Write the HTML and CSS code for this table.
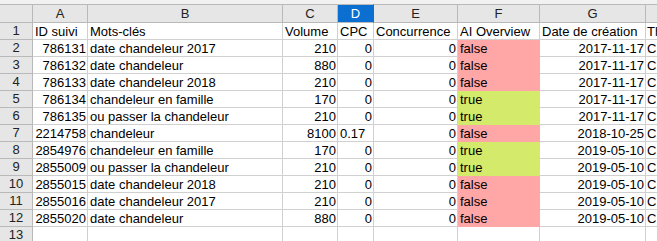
FILE: index.html
```html
<!DOCTYPE html>
<html lang="fr">
<head>
<meta charset="utf-8">
<title>Feuille</title>
<link rel="stylesheet" href="styles.css">
</head>
<body>
<div class="strip"></div>
<div class="sheet">
  <div class="ch corner"></div>
  <div class="ch">A</div>
  <div class="ch">B</div>
  <div class="ch">C</div>
  <div class="ch sel">D</div>
  <div class="ch">E</div>
  <div class="ch">F</div>
  <div class="ch">G</div>
  <div class="ch last"></div>

  <div class="rh">1</div>
  <div class="c">ID suivi</div>
  <div class="c">Mots-clés</div>
  <div class="c">Volume</div>
  <div class="c">CPC</div>
  <div class="c">Concurrence</div>
  <div class="c">AI <span class="spell">Overview</span></div>
  <div class="c">Date de création</div>
  <div class="c clip">Th</div>

  <div class="rh">2</div>
  <div class="c n">786131</div>
  <div class="c">date chandeleur 2017</div>
  <div class="c n">210</div>
  <div class="c n">0</div>
  <div class="c n">0</div>
  <div class="c f">false</div>
  <div class="c n">2017-11-17</div>
  <div class="c clip">C</div>

  <div class="rh">3</div>
  <div class="c n">786132</div>
  <div class="c">date chandeleur</div>
  <div class="c n">880</div>
  <div class="c n">0</div>
  <div class="c n">0</div>
  <div class="c f">false</div>
  <div class="c n">2017-11-17</div>
  <div class="c clip">C</div>

  <div class="rh">4</div>
  <div class="c n">786133</div>
  <div class="c">date chandeleur 2018</div>
  <div class="c n">210</div>
  <div class="c n">0</div>
  <div class="c n">0</div>
  <div class="c f">false</div>
  <div class="c n">2017-11-17</div>
  <div class="c clip">C</div>

  <div class="rh">5</div>
  <div class="c n">786134</div>
  <div class="c">chandeleur en famille</div>
  <div class="c n">170</div>
  <div class="c n">0</div>
  <div class="c n">0</div>
  <div class="c t">true</div>
  <div class="c n">2017-11-17</div>
  <div class="c clip">C</div>

  <div class="rh">6</div>
  <div class="c n">786135</div>
  <div class="c">ou passer la chandeleur</div>
  <div class="c n">210</div>
  <div class="c n">0</div>
  <div class="c n">0</div>
  <div class="c t">true</div>
  <div class="c n">2017-11-17</div>
  <div class="c clip">C</div>

  <div class="rh">7</div>
  <div class="c n">2214758</div>
  <div class="c">chandeleur</div>
  <div class="c n">8100</div>
  <div class="c">0.17</div>
  <div class="c n">0</div>
  <div class="c f">false</div>
  <div class="c n">2018-10-25</div>
  <div class="c clip">C</div>

  <div class="rh">8</div>
  <div class="c n">2854976</div>
  <div class="c">chandeleur en famille</div>
  <div class="c n">170</div>
  <div class="c n">0</div>
  <div class="c n">0</div>
  <div class="c t">true</div>
  <div class="c n">2019-05-10</div>
  <div class="c clip">C</div>

  <div class="rh">9</div>
  <div class="c n">2855009</div>
  <div class="c">ou passer la chandeleur</div>
  <div class="c n">210</div>
  <div class="c n">0</div>
  <div class="c n">0</div>
  <div class="c t">true</div>
  <div class="c n">2019-05-10</div>
  <div class="c clip">C</div>

  <div class="rh">10</div>
  <div class="c n">2855015</div>
  <div class="c">date chandeleur 2018</div>
  <div class="c n">210</div>
  <div class="c n">0</div>
  <div class="c n">0</div>
  <div class="c f">false</div>
  <div class="c n">2019-05-10</div>
  <div class="c clip">C</div>

  <div class="rh">11</div>
  <div class="c n">2855016</div>
  <div class="c">date chandeleur 2017</div>
  <div class="c n">210</div>
  <div class="c n">0</div>
  <div class="c n">0</div>
  <div class="c f">false</div>
  <div class="c n">2019-05-10</div>
  <div class="c clip">C</div>

  <div class="rh">12</div>
  <div class="c n">2855020</div>
  <div class="c">date chandeleur</div>
  <div class="c n">880</div>
  <div class="c n">0</div>
  <div class="c n">0</div>
  <div class="c f">false</div>
  <div class="c n">2019-05-10</div>
  <div class="c clip">C</div>

  <div class="rh">13</div>
  <div class="c"></div>
  <div class="c"></div>
  <div class="c"></div>
  <div class="c"></div>
  <div class="c"></div>
  <div class="c"></div>
  <div class="c"></div>
  <div class="c clip"></div>
</div>
</body>
</html>
```

FILE: styles.css
```css
html, body {
  margin: 0;
  padding: 0;
  background: #ffffff;
  overflow: hidden;
}
body {
  width: 657px;
  height: 241px;
  font-family: "Liberation Sans", Arial, sans-serif;
  font-size: 13px;
  color: #000000;
}
.strip {
  height: 4px;
  background: #f1f1f1;
}
.sheet {
  display: grid;
  grid-template-columns: 33px 55px 195px 55px 36px 84px 82px 106px 11px;
  grid-auto-rows: 17px;
  grid-template-rows: 19px;
  width: 657px;
}
.ch {
  box-sizing: border-box;
  background: #e6e6e6;
  border-top: 1px solid #b9b9b9;
  border-bottom: 1px solid #b9b9b9;
  border-right: 1px solid #b9b9b9;
  text-align: center;
  line-height: 17px;
  color: #222222;
}
.ch.sel {
  background: #0b6fd2;
  color: #ffffff;
  border-right-color: #0b6fd2;
}
.ch.last {
  border-right: 0;
}
.rh {
  box-sizing: border-box;
  background: #e6e6e6;
  border-right: 1px solid #b9b9b9;
  border-bottom: 1px solid #b9b9b9;
  text-align: center;
  line-height: 16px;
  color: #222222;
}
.c {
  box-sizing: border-box;
  border-right: 1px solid #d0d0d0;
  border-bottom: 1px solid #d0d0d0;
  padding: 0 1px 0 2px;
  line-height: 17px;
  white-space: nowrap;
  overflow: hidden;
}
.c.clip {
  border-right: 0;
  padding: 0 0 0 1px;
  text-overflow: clip;
}
.n {
  text-align: right;
}
.f {
  background: #ffa6a6;
  border-color: #ffa6a6;
}
.t {
  background: #d4ea6b;
  border-color: #d4ea6b;
}
.spell {
  text-decoration: underline wavy #e8302a;
  text-decoration-thickness: 1px;
  text-underline-offset: 2px;
  text-decoration-skip-ink: none;
}
```
